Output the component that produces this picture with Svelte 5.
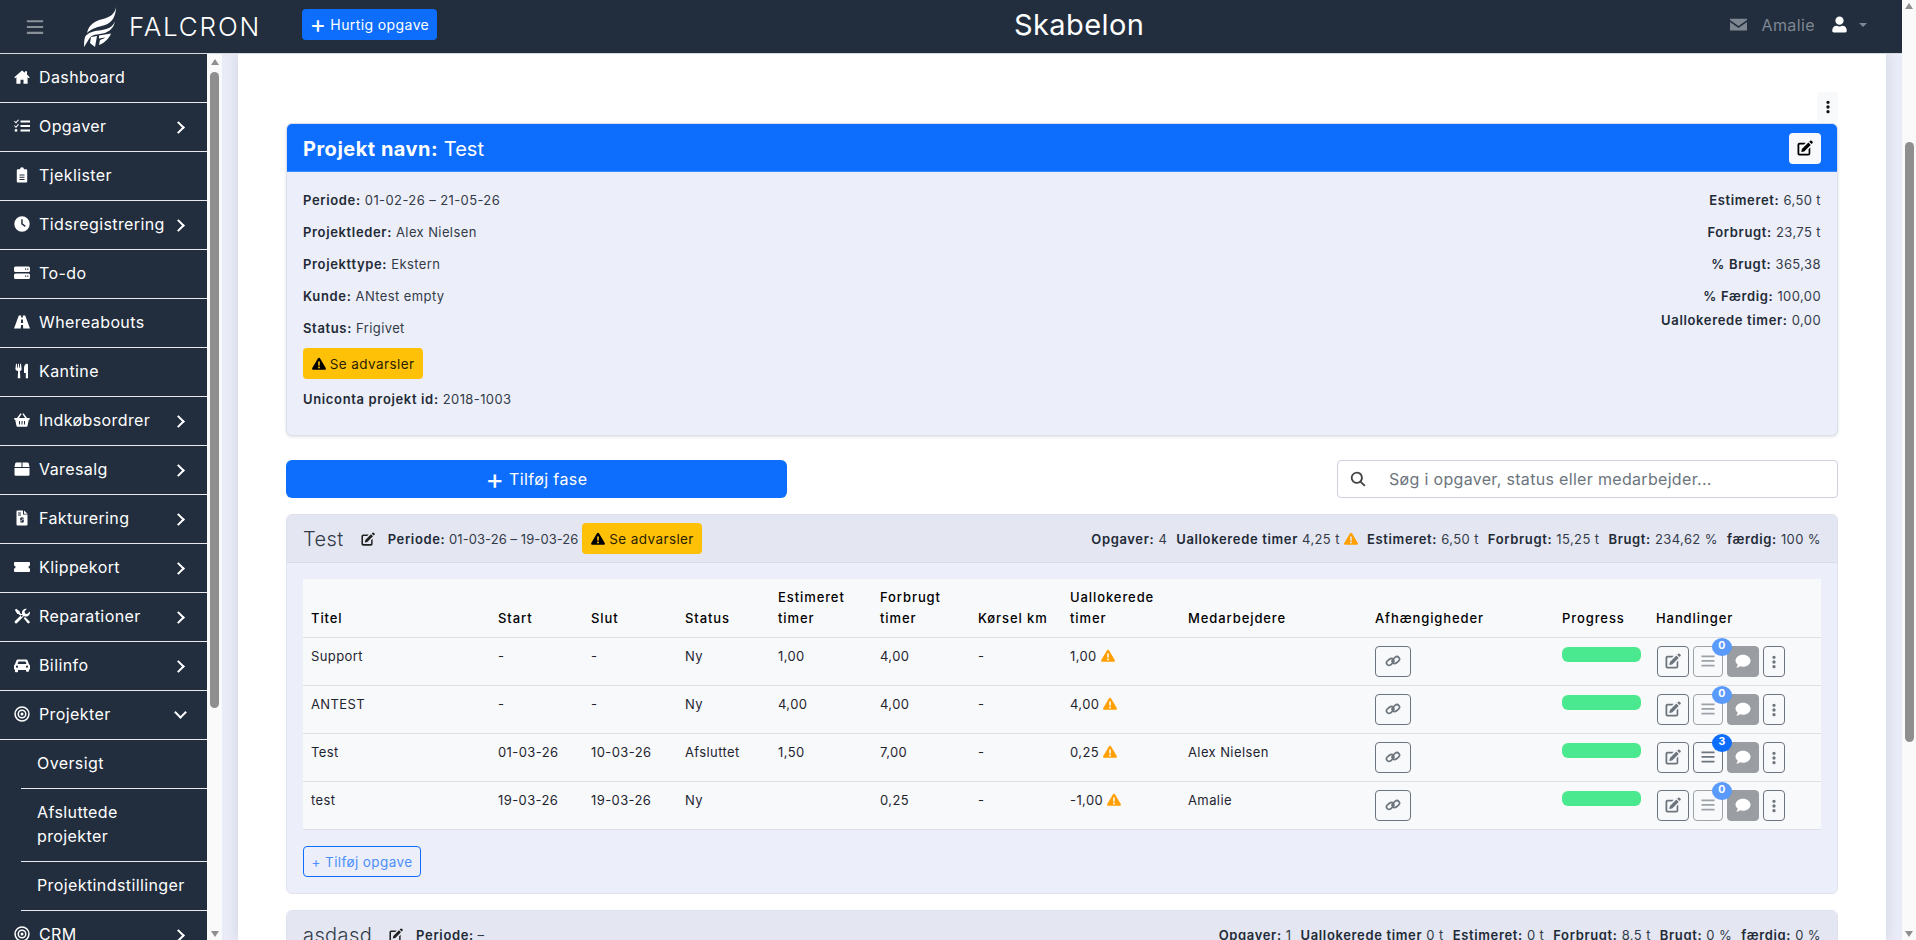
<script>
  const icons = {
    home: 'M8 1.5.3 8.2l.9 1 1.2-1v6.6h4.1v-4h3v4h4.1V8.2l1.2 1 .9-1L13 5.6V2.2h-2v1.6z',
    tasks: 'M.7 2.8 1.9 4l2.2-2.6.9.7L2 5.6.1 3.6zM.7 7.3l1.2 1.2 2.2-2.6.9.7L2 10.1.1 8.1zM2 11a1.4 1.4 0 1 0 0 2.8A1.4 1.4 0 0 0 2 11zM6.5 2.4H16v2H6.5zM6.5 7H16v2H6.5zM6.5 11.6H16v2H6.5z',
    clipboard: 'M3.8 2.3H6a2 2 0 0 1 4 0h2.200a1 1 0 0 1 1 1v11.200a1 1 0 0 1-1 1H3.800a1 1 0 0 1-1-1V3.300a1 1 0 0 1 1-1zM5.500 7.500h5v.9h-5zM5.500 9.800h5v.9h-5zM5.500 12.100h5v.9h-5z',
    clock: 'M8 .3a7.7 7.7 0 1 0 0 15.4A7.7 7.7 0 0 0 8 .3zM7.2 3.3h1.5v4.3l3 2.1-.8 1.2-3.7-2.6z',
    server: 'M1.5 1.5h13A1.5 1.5 0 0 1 16 3v2.5A1.5 1.5 0 0 1 14.500 7h-13A1.500 1.500 0 0 1 0 5.500V3a1.500 1.500 0 0 1 1.500-1.500zM11 3.500v1.200h1.200V3.500zM13.200 3.500v1.200h1.200V3.500zM1.500 8.500h13A1.500 1.500 0 0 1 16 10v2.500a1.500 1.500 0 0 1-1.500 1.500h-13A1.500 1.500 0 0 1 0 12.500V10a1.500 1.500 0 0 1 1.500-1.500zM11 10.500v1.200h1.200v-1.200zM13.200 10.500v1.200h1.200v-1.200z',
    road: 'M4.800 1.500h2.400l-.1 2h1.800l-.1-2h2.400l4.800 13H9.200L9 11H7l-.2 3.500H0zM7.100 5.500 6.900 9h2.200l-.2-3.500z',
    utensils: 'M2 .8h.9l.3 4h.6l.3-4h.8l.3 4h.6l.3-4H7l.6 5.200c0 1.100-.8 1.900-1.700 2.100l.4 7.100H3.700l.4-7.100C3.200 7.900 1.400 7.100 1.400 6zM12.500.8c1 0 1.500.5 1.500 1v13.400h-2.200v-5.200H10V5c0-2 1.300-4.200 2.500-4.200z',
    basket: 'M6.500 1.300 3 6H.3v1.700h.9L2.500 14a1 1 0 0 0 1 .8h9a1 1 0 0 0 1-.8l1.300-6.300h.9V6H13L9.500 1.300l-1.100.8L11 6H5l2.600-3.900zM5 9h1v3.500H5zM7.500 9h1v3.500h-1zM10 9h1v3.500h-1z',
    box: 'M2.500 1.500h5V6h-7l.7-3.500a1.300 1.300 0 0 1 1.300-1zM8.500 1.500h5c.6 0 1.100.4 1.300 1l.7 3.500h-7zM.5 7h15v6.500a1.200 1.200 0 0 1-1.200 1.200H1.700a1.200 1.200 0 0 1-1.200-1.200z',
    invoice: 'M3.500.5H9v4h4.500v10a1 1 0 0 1-1 1h-9a1 1 0 0 1-1-1v-13a1 1 0 0 1 1-1zM10 .5l3.500 3.300H10zM4 2.500h3v.9H4zM4 4.500h3v.9H4zM7.500 7h1v.8h1.300v1H7.700v.7h2.100v2.700H8.500v.8h-1v-.8H6.200v-1h2.100v-.7H6.200V7.800h1.300z',
    ticket: 'M1 3h14a1 1 0 0 1 1 1v2.500a1.500 1.500 0 0 0 0 3V12a1 1 0 0 1-1 1H1a1 1 0 0 1-1-1V9.500a1.500 1.500 0 0 0 0-3V4a1 1 0 0 1 1-1z',
    tools: 'M.9 2 2.200.8 5.800 3.500v1.300l3.100 3-1.300 1.300-3-3H3.300zM9.700 10.200l1.300-1.300 4.300 4.300a1.200 1.200 0 0 1-.1 1.900 1.200 1.200 0 0 1-1.700 0zM15.800 3.500 13.300 6 11 5.500l-.5-2.200L13 .8a4 4 0 0 0-4.800 5.200L1 13a1.500 1.500 0 0 0 2.100 2.100L10 8a4 4 0 0 0 5.800-4.500z',
    car: 'M3.800 2.500h8.400c.6 0 1.200.4 1.400 1L15 7.300c.6.300 1 .9 1 1.500v3.700h-1v1.500a.8.8 0 0 1-.8.8h-1.400a.8.8 0 0 1-.8-.8V13H4v1.500a.8.8 0 0 1-.8.8H1.800a.8.8 0 0 1-.8-.8v-2H0V8.800c0-.6.4-1.200 1-1.500l1.400-3.800c.2-.6.8-1 1.400-1zM4.500 4.500 3.600 7h8.800l-.9-2.500zM3 8.600a1.100 1.100 0 1 0 0 2.200 1.100 1.100 0 0 0 0-2.200zM13 8.600a1.100 1.100 0 1 0 0 2.200 1.100 1.100 0 0 0 0-2.200z',
    target: 'M8 .3a7.700 7.700 0 1 0 0 15.400A7.700 7.700 0 0 0 8 .3zM8 1.800a6.200 6.200 0 1 1 0 12.400A6.200 6.200 0 0 1 8 1.800zM8 3.500a4.500 4.500 0 1 0 0 9 4.500 4.500 0 0 0 0-9zM8 5a3 3 0 1 1 0 6 3 3 0 0 1 0-6zM8 6.500a1.500 1.500 0 1 0 0 3 1.500 1.500 0 0 0 0-3z',
    edit: 'M13.200.8a1 1 0 0 1 1.400 0l.9.9a1 1 0 0 1 0 1.400l-1 1-2.300-2.300zM11.400 2.600l2.300 2.300-6.500 6.500-2.900.6.600-2.900zM2.500 2.800h6.300L7.100 4.500H2.900a.6.6 0 0 0-.6.6v8.100c0 .3.300.6.600.6H11c.3 0 .6-.3.6-.6V9.300l1.700-1.700v6a2 2 0 0 1-2 2H2.500a2 2 0 0 1-2-2V4.800a2 2 0 0 1 2-2z',
    list: 'M1.500 2.500h13v1.700h-13zM1.500 7.100h13v1.700h-13zM1.500 11.800h13v1.700h-13z',
    comment: 'M8 1.800c4.200 0 7.500 2.700 7.500 6s-3.300 6-7.500 6c-1 0-2-.2-2.900-.5-.9.700-2.300 1.300-4 1.300.8-.8 1.500-1.900 1.700-2.900C1.500 10.600.5 9.300.5 7.800c0-3.300 3.300-6 7.500-6z',
    dots: 'M8 .8a1.900 1.900 0 1 0 0 3.800A1.900 1.900 0 0 0 8 .8zM8 6.100a1.900 1.900 0 1 0 0 3.800 1.900 1.900 0 0 0 0-3.800zM8 11.400a1.900 1.900 0 1 0 0 3.800 1.900 1.900 0 0 0 0-3.800z',
    warn: 'M8 .9c.6 0 1 .3 1.300.8l6.400 11c.5.900-.1 2-1.200 2H1.500c-1.100 0-1.700-1.100-1.200-2l6.400-11C7 1.200 7.400.9 8 .9zM7 5l.2 5h1.600L9 5zM8 10.800a1.100 1.100 0 1 0 0 2.200 1.100 1.100 0 0 0 0-2.200z',
    mail: 'M0 2.500h16v1.300L8 9.500 0 3.800zM0 5.600l8 5.600 8-5.600v8H0z',
    user: 'M8 .5a3.900 3.900 0 1 1 0 7.800A3.900 3.900 0 0 1 8 .5zM5.300 9.200c1.700.8 3.700.8 5.400 0 2.400 0 4.100 1.900 4.100 4.200v.7c0 .8-.6 1.400-1.400 1.400H2.600c-.8 0-1.400-.6-1.400-1.400v-.7c0-2.300 1.700-4.200 4.100-4.200z',
    search: 'M6.800.8a6 6 0 0 1 4.800 9.600l3.900 3.900-1.300 1.300-3.900-3.900A6 6 0 1 1 6.800.8zM6.800 2.600a4.200 4.200 0 1 0 0 8.400 4.200 4.200 0 0 0 0-8.400z'
  };

  const nav = [
    { label: 'Dashboard', icon: 'home' },
    { label: 'Opgaver', icon: 'tasks', more: true },
    { label: 'Tjeklister', icon: 'clipboard' },
    { label: 'Tidsregistrering', icon: 'clock', more: true },
    { label: 'To-do', icon: 'server' },
    { label: 'Whereabouts', icon: 'road' },
    { label: 'Kantine', icon: 'utensils' },
    { label: 'Indkøbsordrer', icon: 'basket', more: true },
    { label: 'Varesalg', icon: 'box', more: true },
    { label: 'Fakturering', icon: 'invoice', more: true },
    { label: 'Klippekort', icon: 'ticket', more: true },
    { label: 'Reparationer', icon: 'tools', more: true },
    { label: 'Bilinfo', icon: 'car', more: true },
    { label: 'Projekter', icon: 'target', open: true }
  ];
  const subNav = ['Oversigt', 'Afsluttede\nprojekter', 'Projektindstillinger'];

  const leftInfo = [
    ['Periode:', '01-02-26 – 21-05-26'],
    ['Projektleder:', 'Alex Nielsen'],
    ['Projekttype:', 'Ekstern'],
    ['Kunde:', 'ANtest empty'],
    ['Status:', 'Frigivet']
  ];
  const rightInfo = [
    ['Estimeret:', '6,50 t'],
    ['Forbrugt:', '23,75 t'],
    ['% Brugt:', '365,38'],
    ['% Færdig:', '100,00']
  ];

  const columns = [
    ['Titel', 187], ['Start', 93], ['Slut', 94], ['Status', 93],
    ['Estimeret timer', 102], ['Forbrugt timer', 98], ['Kørsel km', 92],
    ['Uallokerede timer', 118], ['Medarbejdere', 187], ['Afhængigheder', 187],
    ['Progress', 94], ['Handlinger', 173]
  ];
  const tasks = [
    { title: 'Support', start: '-', end: '-', status: 'Ny', est: '1,00', used: '4,00', km: '-', left: '1,00', who: '', count: 0 },
    { title: 'ANTEST', start: '-', end: '-', status: 'Ny', est: '4,00', used: '4,00', km: '-', left: '4,00', who: '', count: 0 },
    { title: 'Test', start: '01-03-26', end: '10-03-26', status: 'Afsluttet', est: '1,50', used: '7,00', km: '-', left: '0,25', who: 'Alex Nielsen', count: 3 },
    { title: 'test', start: '19-03-26', end: '19-03-26', status: 'Ny', est: '', used: '0,25', km: '-', left: '-1,00', who: 'Amalie', count: 0 }
  ];
</script>

{#snippet icon(name, cls = '')}
  <svg class="icon {cls}" viewBox="0 0 16 16" aria-hidden="true"><path fill="currentColor" fill-rule="evenodd" d={icons[name]} /></svg>
{/snippet}

{#snippet chain()}
  <svg class="icon" viewBox="0 0 16 16" aria-hidden="true" fill="none" stroke="currentColor" stroke-width="1.7">
    <rect x="1.200" y="6.400" width="8" height="5" rx="2.500" transform="rotate(-40 5.200 8.900)" />
    <rect x="6.800" y="4.600" width="8" height="5" rx="2.500" transform="rotate(-40 10.800 7.100)" />
  </svg>
{/snippet}

{#snippet stat(label, value)}
  <span><b>{label}</b> {value}</span>
{/snippet}

<div class="shell">
  <div class="page">
    <header class="topbar">
      <button class="burger" aria-label="Menu">{@render icon('list')}</button>
      <div class="logo">
        <svg viewBox="0 0 34 42" aria-hidden="true">
          <path fill="#fff" d="M33 1C32 8 27 11 20 13 12 15 6 18 4 27 9 22 15 21 22 19 29 17 33 10 33 1z" />
          <path fill="#fff" d="M32 15C30 21 25 23 19 24 12 25 5 26 2 31 1 35 1 38 1 41L6 33C8 30 10 29 13 28.500 19 28 30 27 32 15z" />
          <path fill="#fff" d="M8 31 14 30 12 41 7 37zM16 29.500 28 27.500C26 33 21 37 16 39L17 34C20 33 21 32.500 22 31.500L16 32.500z" />
        </svg>
        <span>FALCRON</span>
      </div>
      <button class="quick"><span class="plus">+</span> Hurtig opgave</button>
      <h1>Skabelon</h1>
      <div class="user">
        {@render icon('mail')}
        <span class="name">Amalie</span>
        {@render icon('user', 'white')}
        <i class="caret"></i>
      </div>
    </header>

    <div class="below">
      <aside class="sidebar">
        <nav>
          {#each nav as item}
            <div class="nav-item">
              {@render icon(item.icon)}
              <span>{item.label}</span>
              {#if item.more}<i class="chev"></i>{/if}
              {#if item.open}<i class="chev down"></i>{/if}
            </div>
          {/each}
          {#each subNav as sub}
            <div class="sub-item">{sub}</div>
          {/each}
          <div class="nav-item">
            {@render icon('target')}
            <span>CRM</span>
            <i class="chev"></i>
          </div>
        </nav>
        <div class="scrollbar inner">
          <i class="arrow up"></i>
          <div class="thumb"></div>
          <i class="arrow dn"></i>
        </div>
      </aside>

      <main class="backdrop">
        <div class="content">
          <div class="menu-row"><button class="more" aria-label="Mere">{@render icon('dots')}</button></div>

          <section class="project">
            <div class="project-head">
              <h2><b>Projekt navn:</b> Test</h2>
              <button class="head-edit" aria-label="Rediger">{@render icon('edit')}</button>
            </div>
            <div class="project-body">
              <div class="info-left">
                {#each leftInfo as [k, v]}
                  <p><b>{k}</b> {v}</p>
                {/each}
                <button class="warn-btn">{@render icon('warn')} Se advarsler</button>
                <p><b>Uniconta projekt id:</b> 2018-1003</p>
              </div>
              <div class="info-right">
                {#each rightInfo as [k, v]}
                  <p><b>{k}</b> {v}</p>
                {/each}
                <p class="tight"><b>Uallokerede timer:</b> 0,00</p>
              </div>
            </div>
          </section>

          <div class="toolbar">
            <button class="add-phase"><span class="plus">+</span> Tilføj fase</button>
            <label class="search">
              {@render icon('search')}
              <input placeholder="Søg i opgaver, status eller medarbejder..." />
            </label>
          </div>

          <section class="phase">
            <div class="phase-head">
              <span class="phase-name">Test</span>
              {@render icon('edit', 'phase-edit')}
              <span class="period"><b>Periode:</b> 01-03-26 – 19-03-26</span>
              <button class="warn-btn">{@render icon('warn')} Se advarsler</button>
              <div class="phase-stats">
                {@render stat('Opgaver:', '4')}
                <span><b>Uallokerede timer</b> 4,25 t {@render icon('warn', 'orange')}</span>
                {@render stat('Estimeret:', '6,50 t')}
                {@render stat('Forbrugt:', '15,25 t')}
                {@render stat('Brugt:', '234,62 %')}
                {@render stat('færdig:', '100 %')}
              </div>
            </div>
            <div class="phase-body">
              <table>
                <colgroup>
                  {#each columns as [, w]}<col style="width: {w}px" />{/each}
                </colgroup>
                <thead>
                  <tr>
                    {#each columns as [name]}<th>{name}</th>{/each}
                  </tr>
                </thead>
                <tbody>
                  {#each tasks as t}
                    <tr>
                      <td>{t.title}</td>
                      <td>{t.start}</td>
                      <td>{t.end}</td>
                      <td>{t.status}</td>
                      <td>{t.est}</td>
                      <td>{t.used}</td>
                      <td>{t.km}</td>
                      <td>{t.left} {@render icon('warn', 'orange')}</td>
                      <td>{t.who}</td>
                      <td><button class="act link" aria-label="Afhængigheder">{@render chain()}</button></td>
                      <td><div class="bar"></div></td>
                      <td>
                        <div class="actions">
                          <button class="act edit" aria-label="Rediger">{@render icon('edit')}</button>
                          <button class="act list" class:faded={t.count === 0} aria-label="Opgaver">
                            {@render icon('list')}
                            <span class="badge">{t.count}</span>
                          </button>
                          <button class="act talk" aria-label="Kommentar">{@render icon('comment')}</button>
                          <button class="act dots" aria-label="Mere">{@render icon('dots')}</button>
                        </div>
                      </td>
                    </tr>
                  {/each}
                </tbody>
              </table>
              <button class="add-task">+ Tilføj opgave</button>
            </div>
          </section>

          <section class="phase">
            <div class="phase-head">
              <span class="phase-name">asdasd</span>
              {@render icon('edit', 'phase-edit')}
              <span class="period"><b>Periode:</b> –</span>
              <div class="phase-stats">
                {@render stat('Opgaver:', '1')}
                {@render stat('Uallokerede timer', '0 t')}
                {@render stat('Estimeret:', '0 t')}
                {@render stat('Forbrugt:', '8,5 t')}
                {@render stat('Brugt:', '0 %')}
                {@render stat('færdig:', '0 %')}
              </div>
            </div>
          </section>
        </div>
      </main>
    </div>
  </div>

  <div class="scrollbar outer">
    <i class="arrow up"></i>
    <div class="thumb"></div>
    <i class="arrow dn"></i>
  </div>
</div>

<style>
  :global(body) {
    margin: 0;
    overflow: hidden;
    font-family: Inter, "Noto Sans", sans-serif;
    letter-spacing: 0.025em;
    color: #333b48;
  }

  button {
    font: inherit;
    letter-spacing: inherit;
    cursor: pointer;
  }

  .icon {
    width: 16px;
    height: 16px;
    display: inline-block;
    vertical-align: -2px;
    flex: none;
  }

  .shell {
    display: flex;
    height: 940px;
    overflow: hidden;
  }

  .page {
    width: 1902px;
    display: flex;
    flex-direction: column;
  }

  /* --- Topbar --- */
  .topbar {
    height: 53px;
    flex: none;
    background: #222e3e;
    display: flex;
    align-items: center;
    color: #fff;
    position: relative;
  }

  .burger {
    background: none;
    border: none;
    color: #8a9097;
    padding: 0;
    margin-left: 25px;
    height: 20px;
    width: 20px;
  }

  .burger .icon {
    width: 20px;
    height: 20px;
  }

  .logo {
    display: flex;
    align-items: center;
    margin-left: 38px;
    width: 219px;
    gap: 12px;
    font-size: 26px;
    font-weight: 300;
    letter-spacing: 0.07em;
  }

  .logo svg {
    width: 34px;
    height: 42px;
  }

  .quick {
    background: #0d6efd;
    color: #fff;
    border: none;
    border-radius: 4px;
    width: 135px;
    height: 31px;
    font-size: 14px;
    padding: 0;
    white-space: nowrap;
    margin-top: -4px;
  }

  .plus {
    font-size: 1.75em;
    line-height: 0;
    vertical-align: -0.14em;
    font-weight: 400;
    letter-spacing: 0;
  }

  .topbar h1 {
    position: absolute;
    left: 1014px;
    top: 5px;
    margin: 0;
    font-size: 29px;
    line-height: 40px;
    font-weight: 400;
  }

  .user {
    margin-left: auto;
    margin-right: 35px;
    display: flex;
    align-items: center;
    color: #7e8791;
    font-size: 16px;
    margin-top: -4px;
  }

  .user .icon {
    width: 17px;
    height: 17px;
  }

  .name {
    margin: 0 16px 0 14px;
  }

  .user :global(.white) {
    color: #fff;
  }

  .caret {
    border: 4px solid transparent;
    border-top-color: #7e8791;
    border-bottom: 0;
    margin-left: 11px;
  }

  /* --- Sidebar --- */
  .below {
    display: flex;
    flex: 1;
    min-height: 0;
    border-top: 1px solid #d6dae0;
  }

  .sidebar {
    width: 222px;
    flex: none;
    display: flex;
    background: #222e3e;
    overflow: hidden;
  }

  nav {
    width: 207px;
    flex: none;
    color: #fff;
    background: #222e3e;
  }

  .nav-item {
    height: 48px;
    box-sizing: content-box;
    border-bottom: 1px solid #e8eaee;
    display: flex;
    align-items: center;
    padding-left: 14px;
    font-size: 16px;
    position: relative;
  }

  .nav-item span {
    margin-left: 9px;
    margin-top: -2px;
  }

  .nav-item .icon {
    margin-top: -2px;
  }

  .chev {
    position: absolute;
    left: 174px;
    top: 20px;
    width: 7px;
    height: 7px;
    border-top: 2px solid #fff;
    border-right: 2px solid #fff;
    transform: rotate(45deg);
  }

  .chev.down {
    left: 176px;
    top: 17px;
    transform: rotate(135deg);
  }

  .sub-item {
    margin-left: 21px;
    padding: 11px 0 13px 16px;
    border-bottom: 1px solid #e8eaee;
    font-size: 16px;
    line-height: 24px;
    white-space: pre-line;
  }

  /* --- Scrollbars --- */
  .scrollbar {
    background: #fafafa;
    display: flex;
    flex-direction: column;
    align-items: center;
    flex: none;
  }

  .scrollbar.inner {
    width: 15px;
    padding: 5px 0 3px;
    box-sizing: border-box;
    height: 886px;
  }

  .scrollbar.outer {
    width: 14px;
    padding: 3px 0;
    box-sizing: border-box;
  }

  .thumb {
    width: 9px;
    background: #8f8f8f;
    border-radius: 5px;
  }

  .inner .thumb {
    height: 636px;
    margin-top: 7px;
  }

  .outer .thumb {
    height: 600px;
    margin-top: 133px;
  }

  .arrow {
    border: 4px solid transparent;
    display: block;
    border-left-width: 4.500px;
    border-right-width: 4.500px;
  }

  .arrow.up {
    border-top: 0;
    border-bottom: 6px solid #8f8f8f;
  }

  .arrow.dn {
    border-bottom: 0;
    border-top: 6px solid #8f8f8f;
    margin-top: auto;
  }

  /* --- Main --- */
  .backdrop {
    flex: 1;
    min-width: 0;
    background: #e9ebf6;
    padding: 0 16px;
    display: flex;
    overflow: hidden;
  }

  .content {
    flex: 1;
    background: #fff;
    padding: 38px 48px 0;
    box-shadow: 0 0 12px rgba(34, 46, 62, 0.12);
    font-size: 13px;
  }

  b {
    font-weight: 600;
    letter-spacing: 0.05em;
    color: #222a36;
  }

  p {
    margin: 0;
  }

  .menu-row {
    display: flex;
    justify-content: flex-end;
  }

  .more {
    width: 21px;
    height: 31px;
    padding: 0;
    border: none;
    border-radius: 4px;
    background: #f8f9fa;
    color: #111;
  }

  .more .icon {
    width: 14px;
    height: 14px;
    vertical-align: -1px;
  }

  .project {
    border: 1px solid #dcdfeb;
    border-radius: 6px;
    background: #eceef9;
    box-shadow: 0 1px 3px rgba(34, 46, 62, 0.14);
    overflow: hidden;
  }

  .project-head {
    height: 48px;
    box-sizing: border-box;
    background: #0d6efd;
    display: flex;
    align-items: center;
    justify-content: space-between;
    padding: 2px 16px 0;
    color: #fff;
    border-bottom: 1px solid #3c8aff;
  }

  .project-head h2 {
    margin: 1px 0 0;
    font-size: 20px;
    font-weight: 400;
    letter-spacing: 0;
  }

  .project-head b {
    font-weight: 700;
    color: #fff;
    letter-spacing: 0.025em;
  }

  .head-edit {
    width: 32px;
    height: 31px;
    padding: 0;
    border: none;
    border-radius: 4px;
    background: #f8f9fa;
    color: #000;
  }

  .project-body {
    display: flex;
    justify-content: space-between;
    padding: 18px 16px 23px;
    height: 222px;
  }

  .info-left p,
  .info-right p {
    line-height: 20px;
    margin-bottom: 12px;
  }

  .info-right {
    text-align: right;
  }

  .info-right p.tight {
    margin-top: -8px;
  }

  .warn-btn {
    background: #ffc107;
    border: none;
    border-radius: 4px;
    height: 31px;
    width: 120px;
    padding: 0;
    font-size: 13.500px;
    color: #2b2100;
    white-space: nowrap;
    margin-top: -2px;
    margin-bottom: 10px;
  }

  .warn-btn .icon {
    width: 14px;
    height: 14px;
    color: #000;
  }

  .toolbar {
    display: flex;
    justify-content: space-between;
    margin: 24px 0 16px;
  }

  .add-phase {
    width: 501px;
    height: 38px;
    background: #0d6efd;
    color: #fff;
    border: none;
    border-radius: 6px;
    font-size: 16px;
    padding: 0;
  }

  .search {
    width: 501px;
    height: 38px;
    box-sizing: border-box;
    border: 1px solid #ced1e0;
    border-radius: 4px;
    display: flex;
    align-items: center;
    padding-left: 12px;
    color: #444;
  }

  .search input {
    flex: 1;
    border: none;
    outline: none;
    margin-left: 23px;
    padding: 0;
    font: inherit;
    font-size: 16px;
    letter-spacing: 0.02em;
    min-width: 0;
  }

  .search input::placeholder {
    color: #6c757d;
  }

  .phase {
    border: 1px solid #dfe2ee;
    border-radius: 6px;
    background: #eceef9;
    margin-bottom: 16px;
    overflow: hidden;
  }

  .phase-head {
    height: 47px;
    box-sizing: content-box;
    background: #e4e6f2;
    border-bottom: 1px solid #d8dbe8;
    display: flex;
    align-items: center;
    padding: 0 16px;
  }

  .phase-name {
    font-size: 20px;
    font-weight: 300;
  }

  .phase-head :global(.phase-edit) {
    width: 14px;
    height: 14px;
    margin: 0 13px 0 17px;
    color: #222;
  }

  .period {
    margin-right: 4px;
    letter-spacing: 0.005em;
  }

  .phase-head .warn-btn {
    margin-bottom: 0;
    margin-top: 0;
  }

  .phase-stats {
    margin-left: auto;
    display: flex;
    gap: 9px;
    align-items: center;
    white-space: nowrap;
  }

  .content :global(.orange) {
    color: #ffa000;
    width: 14px;
    height: 14px;
  }

  .phase-body {
    padding: 16px;
  }

  table {
    border-collapse: collapse;
    table-layout: fixed;
    width: 1518px;
    background: #f8f9fb;
    color: #1e2530;
  }

  th {
    text-align: left;
    font-weight: 500;
    padding: 8px;
    vertical-align: bottom;
    line-height: 21px;
    border-bottom: 1px solid #dee0e6;
    color: #000;
    letter-spacing: 0.07em;
  }

  td {
    padding: 8px;
    height: 47px;
    box-sizing: border-box;
    vertical-align: top;
    line-height: 20px;
    border-bottom: 1px solid #dee0e6;
  }

  .act {
    position: relative;
    height: 31px;
    padding: 0;
    background: none;
    border: 1px solid #6c757d;
    border-radius: 4px;
    color: #6c757d;
    display: block;
  }

  .act.link {
    width: 36px;
    margin-left: 0;
  }

  .actions {
    display: flex;
    gap: 4px;
    margin-left: 1px;
  }

  .act.edit {
    width: 32px;
  }

  .act.list {
    width: 30px;
  }

  .act.list.faded {
    border-color: rgba(108, 117, 125, 0.65);
  }

  .act.list.faded .icon {
    opacity: 0.65;
  }

  .act.talk {
    width: 32px;
    background: #9a9ea3;
    border-color: #9a9ea3;
    color: #fff;
  }

  .act.dots {
    width: 22px;
  }

  .act.dots .icon {
    width: 14px;
    height: 14px;
  }

  .badge {
    position: absolute;
    left: 18px;
    top: -9px;
    width: 20px;
    height: 18px;
    border-radius: 50%;
    background: #0d6efd;
    color: #fff;
    font-size: 10.500px;
    font-weight: 700;
    line-height: 16px;
    text-align: center;
    z-index: 1;
  }

  .faded .badge {
    background: #5a9afc;
  }

  .bar {
    height: 15px;
    width: 79px;
    border-radius: 6px;
    background: #4ae98f;
    margin-top: 1px;
  }

  .add-task {
    margin-top: 16px;
    display: block;
    width: 118px;
    height: 31px;
    padding: 0;
    background: none;
    border: 1px solid #0d6efd;
    border-radius: 4px;
    color: #4d8ffb;
    font-size: 13.500px;
    white-space: nowrap;
  }
</style>
